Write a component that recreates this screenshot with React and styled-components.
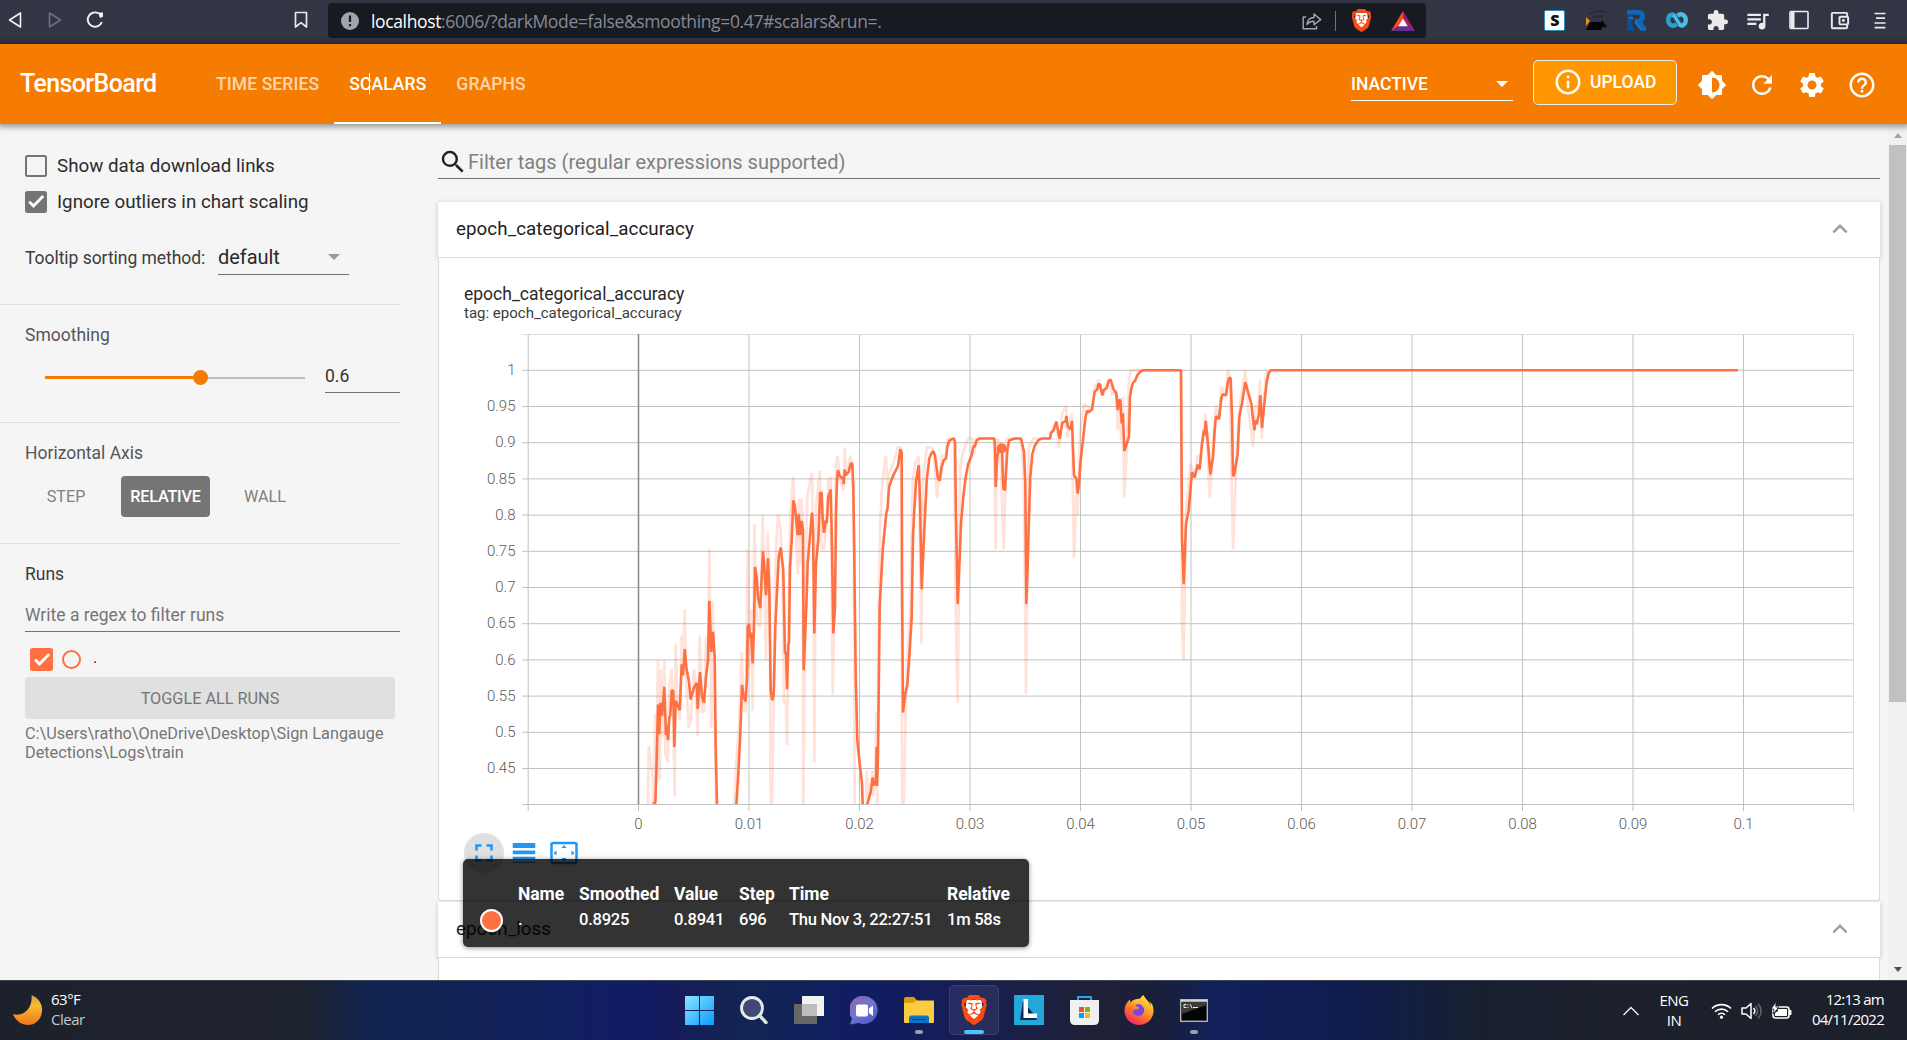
import React from "react";
import styled, { createGlobalStyle, css } from "styled-components";
import {
  MdBrightness6,
  MdRefresh,
  MdSettings,
  MdHelpOutline,
  MdInfoOutline,
  MdSearch,
  MdExtension,
  MdQueueMusic,
  MdFullscreen,
  MdLineWeight,
  MdSettingsOverscan,
  MdExpandLess,
  MdOutlineAccountBalanceWallet,
} from "react-icons/md";
import { SiBrave, SiFirefoxbrowser } from "react-icons/si";

const ui = `Roboto, "Noto Sans", sans-serif`;
const system = `"Open Sans", "Noto Sans", sans-serif`;

const GlobalStyle = createGlobalStyle`
  *, *::before, *::after { box-sizing: border-box; }
  body { margin: 0; overflow: hidden; font-family: ${ui}; color: #212121; }
  svg { display: block; flex: none; }
`;

const Screen = styled.div`
  width: 1907px;
  height: 1040px;
  display: flex;
  flex-direction: column;
  overflow: hidden;
  background: #f5f5f5;
`;

/* ---------- browser bar ---------- */
const BrowserBar = styled.div`
  height: 44px;
  flex: none;
  display: flex;
  align-items: center;
  padding: 0 7px 4px 8px;
  background: #323544;
`;
const NavIcons = styled.div`
  width: 320px;
  display: flex;
  align-items: center;
`;
const NavIcon = styled.span`
  display: flex;
  margin-left: ${(p) => p.$gap || 0}px;
`;
const Address = styled.div`
  width: 1098px;
  height: 35px;
  margin-top: 1px;
  padding: 0 11px 0 13px;
  display: flex;
  align-items: center;
  border-radius: 4px;
  background: #181a21;
`;
const Url = styled.div`
  margin-left: 12px;
  flex: 1;
  font: 400 17.5px/34px ${system};
  letter-spacing: -0.36px;
  color: #878993;
  white-space: nowrap;
`;
const Host = styled.span`
  color: #fff;
`;
const AddressDivider = styled.span`
  width: 1px;
  height: 20px;
  margin: 0 14px 0 13px;
  background: #70737c;
`;
const Extensions = styled.div`
  margin-left: auto;
  display: flex;
  align-items: center;
`;
const Extension = styled.span`
  width: 40.6px;
  display: flex;
  justify-content: center;
  color: #ebebee;
`;
const LetterTile = styled.span`
  width: 21px;
  height: 21px;
  border: 1px solid #2b8fb8;
  border-radius: 2px;
  background: #fff;
  color: #111;
  font: 800 16px/18px ${system};
  text-align: center;
`;

/* ---------- app header ---------- */
const Header = styled.header`
  position: relative;
  z-index: 3;
  height: 80px;
  flex: none;
  display: flex;
  align-items: center;
  padding: 0 20px;
  background: #f57c00;
  box-shadow: 0 1px 6px 2px rgba(0, 0, 0, 0.38);
  color: #fff;
`;
const Brand = styled.h1`
  margin: 0;
  width: 181px;
  font: 500 25px/82px ${ui};
  letter-spacing: -0.62px;
`;
const Tabs = styled.nav`
  display: flex;
  height: 80px;
`;
const Tab = styled.a`
  position: relative;
  padding: 0 15px;
  font: 500 17.5px/81px ${ui};
  letter-spacing: 0.1px;
  color: ${(p) => (p.$active ? "#fff" : "rgba(255,255,255,.7)")};
  box-shadow: ${(p) => (p.$active ? "inset 0 -2px #fff" : "none")};
`;
const TextCursor = styled.i`
  position: absolute;
  left: 35px;
  top: 29px;
  width: 1px;
  height: 21px;
  background: #fff;
`;
const HeaderTools = styled.div`
  margin-left: auto;
  display: flex;
  align-items: center;
`;
const Inactive = styled.div`
  width: 162px;
  height: 30px;
  margin: 4px 20px 0 0;
  padding: 0 5px 3px 0;
  display: flex;
  align-items: center;
  justify-content: space-between;
  border-bottom: 1px solid #fff;
  font: 500 17.5px/26px ${ui};
`;
const Caret = styled.i`
  border: 6px solid transparent;
  border-top-color: ${(p) => p.$color || "#fff"};
  border-bottom: 0;
`;
const Upload = styled.button`
  width: 144px;
  height: 45px;
  margin: 0 10px 3px 0;
  padding: 0 0 2px 19px;
  display: flex;
  align-items: center;
  gap: 7px;
  border: 1px solid #ebebeb;
  border-radius: 5px;
  background: #ff9800;
  color: #fff;
  font: 500 17.5px/40px ${ui};
`;
const HeaderIcon = styled.span`
  width: 50px;
  display: flex;
  justify-content: center;
  padding-top: 1px;
`;

/* ---------- workspace ---------- */
const Workspace = styled.div`
  height: 856px;
  display: flex;
  overflow: hidden;
`;
const Sidebar = styled.aside`
  width: 438px;
  flex: none;
`;
const Section = styled.section`
  width: 400px;
  height: ${(p) => p.$height}px;
  padding: ${(p) => p.$top}px 0 0 25px;
  border-bottom: ${(p) => (p.$last ? "0" : "1px solid #dedede")};
`;
const Title = styled.h3`
  margin: 0;
  font: 400 17.5px/20px ${ui};
  color: ${(p) => (p.$dark ? "#3c3c3c" : "#555")};
`;
const CheckRow = styled.label`
  height: 36px;
  display: flex;
  align-items: center;
  gap: 10px;
  font: 400 18.75px/36px ${ui};
  color: #2c2c2c;
`;
const Box = styled.span`
  width: ${(p) => p.$size || 22}px;
  height: ${(p) => p.$size || 22}px;
  display: flex;
  align-items: center;
  justify-content: center;
  border: 2px solid ${(p) => p.$color || "#747474"};
  border-radius: 2.5px;
  background: ${(p) => (p.$on ? p.$color || "#747474" : "transparent")};
`;
const SortRow = styled.div`
  height: 35px;
  margin-top: 20px;
  display: flex;
  font: 400 17.5px/37px ${ui};
  letter-spacing: -0.04px;
  color: #3c3c3c;
`;
const SortLabel = styled.span`
  width: 193px;
`;
const Select = styled.div`
  width: 131px;
  padding: 0 9px 0 0;
  display: flex;
  align-items: center;
  justify-content: space-between;
  border-bottom: 1px solid #737373;
  font: 400 20px/34px ${ui};
  color: #2a2a2a;
`;
const SliderRow = styled.div`
  height: 31px;
  margin-top: 17px;
  padding-left: 20px;
  display: flex;
  align-items: center;
  gap: 20px;
`;
const Track = styled.div`
  width: 260px;
  height: 2px;
  display: flex;
  align-items: center;
  background: #bdbdbd;
`;
const Fill = styled.span`
  width: 148px;
  height: 3px;
  background: #f57c00;
`;
const Thumb = styled.span`
  width: 15px;
  height: 15px;
  border-radius: 50%;
  background: #f57c00;
`;
const NumberField = styled.div`
  width: 75px;
  height: 31px;
  border-bottom: 1px solid #737373;
  font: 400 17.5px/28px ${ui};
  color: #333;
`;
const AxisButtons = styled.div`
  margin-top: 13px;
  display: flex;
  gap: 14px;
`;
const AxisButton = styled.button`
  width: 82px;
  height: 41px;
  padding: 0;
  border: 0;
  border-radius: 4px;
  background: transparent;
  color: #808080;
  font: 400 16.2px/41px ${ui};
  ${(p) =>
    p.$on &&
    css`
      width: 89px;
      background: #757575;
      color: #fff;
      font-weight: 500;
      letter-spacing: -0.2px;
    `}
`;
const RegexField = styled.div`
  height: 34px;
  margin-top: 14px;
  border-bottom: 1px solid #737373;
  font: 400 17.5px/34px ${ui};
  color: #757575;
`;
const RunRow = styled.div`
  height: 45px;
  padding: 10px 0 0 5px;
  display: flex;
  align-items: center;
`;
const RunDot = styled.span`
  width: 19px;
  height: 19px;
  margin: 0 12px 0 9px;
  border: 2px solid #ff7043;
  border-radius: 50%;
`;
const RunName = styled.span`
  font: 400 16px/18px ${ui};
  padding-bottom: 3px;
  color: #222;
`;
const ToggleButton = styled.button`
  width: 370px;
  height: 42px;
  border: 0;
  border-radius: 4px;
  background: #e0e0e0;
  color: #757575;
  font: 400 16.25px/42px ${ui};
`;
const LogPath = styled.p`
  margin: 5px 0 0;
  font: 400 16.25px/19px ${ui};
  color: #757575;
`;

const Main = styled.main`
  width: 1450px;
  flex: none;
`;
const FilterRow = styled.div`
  width: 1442px;
  height: 55px;
  padding-top: 21px;
  display: flex;
  align-items: center;
  border-bottom: 1px solid #737373;
  color: #808080;
  font: 400 20px/32px ${ui};
`;
const CardHeader = styled.div`
  position: relative;
  width: 1442px;
  height: 56px;
  margin-top: ${(p) => p.$gap}px;
  padding: 0 25px 1px 18px;
  display: flex;
  align-items: center;
  justify-content: space-between;
  background: #fff;
  border-bottom: 1px solid #dadada;
  box-shadow: 0 1px 5px rgba(0, 0, 0, 0.2);
  font: 400 18.75px/52px ${ui};
  color: #212121;
`;
const CardName = styled.span`
  padding-bottom: 1px;
  letter-spacing: 0.07px;
`;
const CardBody = styled.div`
  position: relative;
  z-index: 2;
  width: 1442px;
  height: 643px;
  padding: 26px 0 0 25px;
  background: #fff;
  border: 1px solid #dadada;
  border-top: 0;
  border-radius: 0 0 3px 3px;
`;
const ChartTitle = styled.div`
  font: 400 17.5px/20px ${ui};
  color: #2a2a2a;
`;
const ChartTag = styled.div`
  font: 400 15px/18px ${ui};
  color: #3c3c3c;
`;
const ChartSvg = styled.svg`
  width: 1400px;
  height: 503px;
  margin: 8px 0 0 0;
`;
const AxisText = styled.text`
  font: 300 15px ${ui};
  fill: #5c5c5c;
`;
const ChartActions = styled.div`
  display: flex;
  color: #2196f3;
`;
const ChartAction = styled.span`
  width: 40px;
  height: 40px;
  display: flex;
  align-items: center;
  justify-content: center;
  border-radius: 50%;
  background: ${(p) => (p.$on ? "#e0e0e0" : "transparent")};
`;
const Tooltip = styled.div`
  position: absolute;
  left: 24px;
  top: 601px;
  width: 566px;
  height: 88px;
  padding: 22px 0 0 17px;
  border-radius: 5px;
  background: rgba(0, 0, 0, 0.8);
  box-shadow: 0 1px 5px rgba(0, 0, 0, 0.45);
  color: #fff;
  display: grid;
  grid-template-columns: 38px 61px 95px 65px 50px 158px auto;
  grid-template-rows: 26px 26px;
  font: 500 16.6px/26px ${ui};
`;
const HeadCell = styled.b`
  font-weight: 700;
  font-size: 17.5px;
  letter-spacing: -0.06px;
`;
const Cell = styled.span`
  letter-spacing: -0.28px;
`;
const SeriesDot = styled.span`
  width: 23px;
  height: 23px;
  margin-top: 2px;
  border: 2px solid #fff;
  border-radius: 50%;
  background: #ff7043;
`;
const ScrollBar = styled.div`
  width: 19px;
  padding: 8px 0;
  display: flex;
  flex-direction: column;
  align-items: center;
  background: #f1f1f1;
`;
const ScrollArrow = styled.i`
  margin-bottom: ${(p) => (p.$up ? 7 : 0)}px;
  margin-top: ${(p) => (p.$up ? 1 : 0)}px;
  border: 4.5px solid transparent;
  ${(p) =>
    p.$up
      ? "border-top: 0; border-bottom: 5px solid #a3a3a3;"
      : "border-bottom: 0; border-top: 5px solid #505050; margin-top: auto;"}
`;
const ScrollThumb = styled.i`
  width: 17px;
  height: 557px;
  background: #c1c1c1;
`;

/* ---------- taskbar ---------- */
const Taskbar = styled.footer`
  position: relative;
  z-index: 4;
  height: 60px;
  flex: none;
  display: flex;
  align-items: center;
  border-top: 1px solid #3b4453;
  background: linear-gradient(
    90deg,
    #1d212b 0,
    #1d232d 300px,
    #11244f 365px,
    #11215a 520px,
    #101c66 640px,
    #171b5a 670px,
    #112552 745px,
    #101d63 860px,
    #171d56 960px,
    #1b1f44 1030px,
    #1e2035 1100px,
    #1a1f3a 1160px,
    #10205a 1215px,
    #101d50 1340px,
    #182030 1480px,
    #1c212b 1600px,
    #1c202a 100%
  );
  color: #fff;
  font: 400 15px/20px ${system};
`;
const Weather = styled.div`
  width: 665px;
  padding-left: 12px;
  display: flex;
  align-items: center;
  gap: 8px;
  letter-spacing: -0.5px;
`;
const Lines = styled.div`
  padding-bottom: 4px;
`;
const Soft = styled.div`
  color: #c6c8cb;
`;
const Apps = styled.div`
  display: flex;
  gap: 5px;
  padding: 0 0 1px 9px;
`;
const AppSlot = styled.div`
  width: 50px;
  height: 50px;
  display: flex;
  flex-direction: column;
  align-items: center;
  border-radius: 5px;
  border: 1px solid ${(p) => (p.$on ? "rgba(255,255,255,.09)" : "transparent")};
  background: ${(p) => (p.$on ? "rgba(255,255,255,.07)" : "none")};
`;
const AppIcon = styled.span`
  height: 44px;
  padding-top: 4px;
  display: flex;
  align-items: center;
`;
const Running = styled.i`
  width: ${(p) => (p.$on ? 20 : 8)}px;
  height: 4px;
  border-radius: 2px;
  background: ${(p) => (p.$on ? "#4cc2ff" : "#9a9cab")};
`;
const Tray = styled.div`
  margin-left: auto;
  padding: 0 23px 0 0;
  display: flex;
  align-items: center;
`;
const Language = styled.div`
  width: 40px;
  margin: 0 17px 0 15px;
  padding-bottom: 2px;
  text-align: center;
  letter-spacing: -0.5px;
`;
const StatusIcons = styled.div`
  display: flex;
  gap: 9px;
`;
const Clock = styled.div`
  width: 92px;
  padding-bottom: 4px;
  text-align: right;
  letter-spacing: -0.75px;
  white-space: nowrap;
`;

/* ---------- chart data ---------- */
/* Each piece is an origin and a list of points in thirds of a pixel from it. */
const A = [620, 480];
const B = [740, 420];
const C = [900, 350];

const smoothed = [
  [[A, "98,969 106,969 109,880 114,673 118,762 121,668 126,708 133,620 138,765 140,735 144,780 148,712 151,705 155,630 160,632 163,800 167,662 173,675 179,690 185,552 189,586 194,507 199,560 207,605 212,658 222,622 230,608 233,686 240,576 246,650 252,668 258,590 264,540 268,362 274,515 279,455 284,530 287,800 291,976"]],
  [
    [A, "349,976 355,880 361,760 366,614 371,650 377,664 381,590 383,440 387,432 390,472 393,457 398,550 402,440 405,260 410,290 414,350 421,384 425,290 429,213 433,260 438,345 444,234 448,330 452,632 457,660 461,645 466,440 476,230 482,202 490,270 495,520 498,515 501,627 505,490 507,490 510,260 515,180 520,60 525,80 533,165 536,102 541,165 545,122 549,150 551,570 559,380 563,250 576,97 579,150 583,460 588,250 595,180 600,38 605,38 608,120 612,158 617,120 620,130 625,50 632,28 636,200 640,460 645,380 648,100"],
    [B, "291,180 294,150 298,165 310,178 311,192 314,148 317,165 326,155 332,130 337,130 340,200 343,400"],
    [A, "704,340 707,580 712,780 720,860 726,910 728,976"],
  ],
  [
    [A, "741,976 752,935 758,892 762,915 768,905 770,800 771,917 774,820 779,380 788,210 799,100"],
    [B, "443,260 447,200 460,165 474,138 481,87 485,97 486,480"],
    [C, "7,800 9,1087 15,1035 22,1005 28,920 35,800 39,560 43,480 48,395 56,345 60,450 65,717 72,560 80,390 88,325 94,310 100,303 105,315 113,380 119,392 125,350 131,330 138,325 142,290 148,272 155,267 162,265 165,275 168,500 173,762 180,600 183,520 190,440 197,380 205,340 215,315 220,288 224,290 230,270 240,265 283,265 285,290 287,410 292,320 297,295 302,290 306,295 310,415 315,420 322,300 328,270 345,265 363,265 372,305 376,400 379,762 383,640 387,500 391,380 397,312 405,285 415,270 425,265 450,265 453,248 461,240 469,214 479,266 487,218 497,213 499,197 503,228 511,238 516,212 522,375 529,385 533,430 537,400 542,330 549,270 556,205 561,182 566,186 576,178 584,124 592,118 595,102 600,102 607,136 611,120 620,114 626,92 632,88 640,116 649,130 653,180 657,150 661,150 665,220 669,190 673,303 680,280 687,260 690,140 694,115 699,98 705,92 712,75 722,64 730,60 843,60 846,560 851,702 858,520 866,480 872,410 876,366 884,382 893,343 899,358 906,280 912,240 914,255 917,212 925,290 931,373 939,320 944,240 948,198 957,207 964,145 968,132 978,136 983,98 988,82 992,85 996,200 999,378 1003,372 1013,310 1018,200 1026,160 1036,96 1044,125 1054,160 1063,240 1067,210 1070,222 1077,190 1081,135 1086,233 1092,170 1100,95 1106,68 1112,60 2514,60"],
  ],
];

const raw = [
  [[A, "84,976 86,797 92,840 98,890 100,976 106,700 109,900 114,540 117,880 120,898 122,567 127,770 133,540 136,820 144,846 148,616 155,567 160,700 164,948 167,490 172,660 180,718 185,465 190,520 194,388 199,600 206,743 212,718 222,567 228,620 233,769 239,465 246,695 252,695 258,470 264,540 268,208 274,743 278,362 284,700 288,976"]],
  [
    [A, "342,976 350,830 357,740 365,516 371,690 377,695 383,208 388,560 393,388 398,692 403,132 412,430 421,440 428,106 438,540 443,157 449,300 452,976 456,976 462,600 468,200 474,103 482,150 488,320 492,665 498,665 501,795 506,400 511,100 519,-10 526,100 533,283 537,56 540,255 544,56 548,130 550,976 556,400 562,50 571,0 576,-22 580,200 583,847 588,80 599,-28 605,207 612,207 620,130 625,0 632,-10 638,642 644,300 648,-50"],
    [B, "293,107 300,180 311,210 314,82 319,165 331,107 337,130 341,300"],
    [A, "704,976"],
  ],
  [
    [A, "738,976 740,873 748,960 758,870 760,948 766,870 769,695 772,976 777,330 781,130 787,10"],
    [B, "437,107 443,200 447,160 460,130 474,80 481,80 485,200"],
    [A, "846,976 851,976"],
    [C, "20,950 30,800 38,395 46,340 56,318 64,880 69,400 80,290 98,293 103,320 111,443 117,380 125,315 138,320 142,267 162,265 168,830 173,1058 181,345 190,300 205,265 218,265 222,315 228,265 282,265 287,598 291,265 300,275 311,598 320,265 363,265 371,380 378,1032 386,290 400,265 450,265 455,240 469,214 476,293 487,190 499,165 502,262 515,190 522,623 530,400 533,495 540,250 552,162 575,178 584,110 596,88 607,136 615,110 626,88 636,135 649,120 653,240 657,140 664,270 668,140 673,443 680,300 687,90 692,60 843,60 846,830 851,930 858,480 872,340 884,382 893,315 900,330 917,190 929,443 940,270 948,165 957,207 964,110 978,136 983,62 988,62 999,598 1010,300 1020,160 1036,60 1045,180 1059,290 1067,165 1075,180 1080,88 1085,265 1092,130 1100,60"],
  ],
];

const toPoints = (pieces) =>
  pieces
    .flatMap(([[ox, oy], list]) =>
      list.split(" ").map((pair) => {
        const [x, y] = pair.split(",").map(Number);
        return `${(ox + x / 3).toFixed(1)},${(oy + y / 3 + 0.2).toFixed(1)}`;
      })
    )
    .join(" ");

const xTicks = ["0", "0.01", "0.02", "0.03", "0.04", "0.05", "0.06", "0.07", "0.08", "0.09", "0.1"];
const yTicks = ["1", "0.95", "0.9", "0.85", "0.8", "0.75", "0.7", "0.65", "0.6", "0.55", "0.5", "0.45"];

function Chart() {
  return (
    <ChartSvg viewBox="464 330 1400 503">
      <defs>
        <clipPath id="plot">
          <rect x="528" y="334" width="1326" height="470" />
        </clipPath>
      </defs>
      <g stroke="#c2c2c2">
        {yTicks.map((t, i) => (
          <line key={t} x1="522" x2="1853.5" y1={370.3 + i * 36.2} y2={370.3 + i * 36.2} />
        ))}
        {xTicks.map((t, i) => (
          <line key={t} y1="334" y2="811" x1={638.5 + i * 110.5} x2={638.5 + i * 110.5} />
        ))}
        <line x1="528.2" x2="528.2" y1="334" y2="811" />
        <line x1="1853.5" x2="1853.5" y1="334" y2="811" stroke="#ddd" />
        <line x1="522" x2="1853.5" y1="334.5" y2="334.5" stroke="#ddd" />
        <line x1="522" x2="1853.5" y1="804.5" y2="804.5" />
      </g>
      <line x1="638.5" x2="638.5" y1="334" y2="804" stroke="#8c8c8c" strokeWidth="1.6" />
      <g clipPath="url(#plot)" fill="none" strokeLinejoin="bevel">
        {raw.map((s, i) => (
          <polyline key={i} points={toPoints(s)} stroke="#ff7043" strokeOpacity=".2" strokeWidth="2.7" />
        ))}
        {smoothed.map((s, i) => (
          <polyline key={i} points={toPoints(s)} stroke="#ff7043" strokeWidth="2.6" />
        ))}
      </g>
      <circle cx="1001.7" cy="448.3" r="5" fill="#ff7043" />
      {yTicks.map((t, i) => (
        <AxisText key={t} x="515.5" y={375 + i * 36.2} textAnchor="end">
          {t}
        </AxisText>
      ))}
      {xTicks.map((t, i) => (
        <AxisText key={t} x={638.5 + i * 110.5} y="829" textAnchor="middle">
          {t}
        </AxisText>
      ))}
    </ChartSvg>
  );
}

/* ---------- small drawings ---------- */
const Check = ({ size = 20 }) => (
  <svg width={size} height={size} viewBox="0 0 20 20" fill="none" stroke="#fff" strokeWidth="2.9">
    <path d="M3.2 9.7l4.300 4.200L17.200 4.100" />
  </svg>
);

const BraveLogo = ({ size }) => (
  <svg width={size} height={size} viewBox="0 0 24 24">
    <path d="M6 4h12l1 9-7 7-7-7z" fill="#fff" />
    <SiBrave size={24} color="#fb4a14" />
  </svg>
);

const BackIcon = ({ flip, color }) => (
  <svg width="14" height="18" viewBox="0 0 14 18" fill="none" stroke={color} strokeWidth="1.6" strokeLinejoin="round">
    <path d={flip ? "M1.5 2v14L12.5 9z" : "M12.5 2v14L1.5 9z"} />
  </svg>
);

const extensions = [
  <LetterTile key="s">S</LetterTile>,
  <svg key="dog" width="22" height="22" viewBox="0 0 22 22">
    <path d="M1 8l4 4-4 5z" fill="#f28c1e" />
    <path d="M5 13h11l1-2 5 7-2 1-2-2-2 4H1z" fill="#050505" />
    <path d="M4 5l7-3 9 1M8 8l10-1" stroke="#26272f" strokeWidth="1.3" fill="none" />
  </svg>,
  <svg key="r" width="19" height="21" viewBox="0 0 19 21">
    <path d="M0 0h11q7 0 7 6.500 0 3.500-3 5.500l4 5v4h-4L8 12V9h3q2-.5 2-2.500T11 4.500H0z" fill="#0f66bd" />
    <path d="M0 4.500h4l3 4-3 4 4 8H0z" fill="#0b4f9c" />
    <path d="M2 8h4M8 12l6 8" stroke="#2f9be8" strokeWidth="1" />
  </svg>,
  <svg key="c" width="22" height="18" viewBox="0 0 22 18" fill="none" strokeLinecap="round">
    <path d="M13.500 12.500L9 5.500C7 2 2.300 3.500 2.200 9c0 4.500 4 7 7.300 5" stroke="#2b9fd0" strokeWidth="4.400" />
    <path d="M8.500 5.500l4.500 7c2 3.500 6.700 2 6.800-3.500 0-4.500-4-7-7.300-5" stroke="#49bde6" strokeWidth="4.400" />
    <path d="M10.500 4L15 12M7 6.500l4.500 7.500" stroke="#14506f" strokeWidth=".9" />
  </svg>,
  <MdExtension key="ext" size={23} />,
  <MdQueueMusic key="queue" size={27} />,
  <svg key="panel" width="20" height="20" viewBox="0 0 20 20" fill="none" stroke="currentColor">
    <rect x="1" y="1.500" width="18" height="17" rx="1" strokeWidth="1.600" />
    <path d="M3.500 2v16" strokeWidth="4" />
  </svg>,
  <MdOutlineAccountBalanceWallet key="wallet" size={23} />,
  <svg key="menu" width="12" height="17" viewBox="0 0 12 17" stroke="currentColor" strokeWidth="1.700">
    <path d="M.5 1.500h11M2 6.200h9M.5 11h11M.5 15.700h11" />
  </svg>,
];

function Browser() {
  return (
    <BrowserBar>
      <NavIcons>
        <NavIcon><BackIcon color="#f2f2f4" /></NavIcon>
        <NavIcon $gap={26}><BackIcon flip color="#6e7180" /></NavIcon>
        <NavIcon $gap={24}>
          <svg width="18" height="18" viewBox="0 0 18 18" fill="none" stroke="#f2f2f4" strokeWidth="1.900">
            <path d="M12.500 2.300A7.200 7.200 0 1 0 15.800 11" />
            <path d="M12 1.500h5v4.200l-3 1.200z" fill="#f2f2f4" stroke="none" />
          </svg>
        </NavIcon>
        <NavIcon $gap={190}>
          <svg width="14" height="18" viewBox="0 0 14 18" fill="none" stroke="#e8e8ec" strokeWidth="1.700" strokeLinejoin="round">
            <path d="M1.500 1.500h11v14.500L7 11.700 1.500 16z" />
          </svg>
        </NavIcon>
      </NavIcons>
      <Address>
        <svg width="18" height="18" viewBox="0 0 18 18">
          <circle cx="9" cy="9" r="9" fill="#a2a4ad" />
          <path d="M9 3.500v6.500M9 12v2.300" stroke="#181a21" strokeWidth="2.200" />
        </svg>
        <Url>
          <Host>localhost</Host>:6006/?darkMode=false&amp;smoothing=0.47#scalars&amp;run=.
        </Url>
        <svg width="20" height="18" viewBox="0 0 20 18" fill="none" stroke="#a5a7ae" strokeWidth="1.400" strokeLinejoin="round">
          <path d="M4 5H1.200v11.800h13.300V14" />
          <path d="M5 12.500c.5-5 3.300-7 7-7V2l6.700 5.600L12 12.800V9.300c-3 0-5 .6-7 3.200z" />
        </svg>
        <AddressDivider />
        <BraveLogo size={23} />
        <NavIcon $gap={18}>
          <svg width="24" height="20" viewBox="0 0 24 20">
            <path d="M12 0L0 20l12-6z" fill="#ff4724" />
            <path d="M12 0l12 20-12-6z" fill="#9e1f63" />
            <path d="M0 20h24l-7-5H7z" fill="#662d91" />
            <path d="M12 7.500l4.700 7.700H7.300z" fill="#fff" />
          </svg>
        </NavIcon>
      </Address>
      <Extensions>
        {extensions.map((icon, i) => (
          <Extension key={i}>{icon}</Extension>
        ))}
      </Extensions>
    </BrowserBar>
  );
}

function TopHeader() {
  return (
    <Header>
      <Brand>TensorBoard</Brand>
      <Tabs>
        <Tab>TIME SERIES</Tab>
        <Tab $active>SCALARS<TextCursor /></Tab>
        <Tab>GRAPHS</Tab>
      </Tabs>
      <HeaderTools>
        <Inactive>INACTIVE<Caret /></Inactive>
        <Upload><MdInfoOutline size={30} />UPLOAD</Upload>
        <HeaderIcon><MdBrightness6 size={30} /></HeaderIcon>
        <HeaderIcon><MdRefresh size={30} /></HeaderIcon>
        <HeaderIcon><MdSettings size={30} /></HeaderIcon>
        <HeaderIcon><MdHelpOutline size={30} /></HeaderIcon>
      </HeaderTools>
    </Header>
  );
}

function Settings() {
  return (
    <Sidebar>
      <Section $height={181} $top={24}>
        <CheckRow><Box />Show data download links</CheckRow>
        <CheckRow><Box $on><Check /></Box>Ignore outliers in chart scaling</CheckRow>
        <SortRow>
          <SortLabel>Tooltip sorting method:</SortLabel>
          <Select>default<Caret $color="#9a9a9a" /></Select>
        </SortRow>
      </Section>
      <Section $height={118} $top={20}>
        <Title>Smoothing</Title>
        <SliderRow>
          <Track><Fill /><Thumb /></Track>
          <NumberField>0.6</NumberField>
        </SliderRow>
      </Section>
      <Section $height={121} $top={20}>
        <Title>Horizontal Axis</Title>
        <AxisButtons>
          <AxisButton>STEP</AxisButton>
          <AxisButton $on>RELATIVE</AxisButton>
          <AxisButton>WALL</AxisButton>
        </AxisButtons>
      </Section>
      <Section $height={300} $top={20} $last>
        <Title $dark>Runs</Title>
        <RegexField>Write a regex to filter runs</RegexField>
        <RunRow>
          <Box $on $size={23} $color="#ff7043"><Check /></Box>
          <RunDot />
          <RunName>.</RunName>
        </RunRow>
        <ToggleButton>TOGGLE ALL RUNS</ToggleButton>
        <LogPath>
          C:\Users\ratho\OneDrive\Desktop\Sign Langauge
          <br />
          Detections\Logs\train
        </LogPath>
      </Section>
    </Sidebar>
  );
}

const tooltipHead = ["", "Name", "Smoothed", "Value", "Step", "Time", "Relative"];
const tooltipRow = [".", "0.8925", "0.8941", "696", "Thu Nov 3, 22:27:51", "1m 58s"];

function Scalars() {
  return (
    <Main>
      <FilterRow>
        <MdSearch size={30} color="#212121" />
        Filter tags (regular expressions supported)
      </FilterRow>
      <CardHeader $gap={23}>
        <CardName>epoch_categorical_accuracy</CardName>
        <MdExpandLess size={30} color="#9e9e9e" />
      </CardHeader>
      <CardBody>
        <ChartTitle>epoch_categorical_accuracy</ChartTitle>
        <ChartTag>tag: epoch_categorical_accuracy</ChartTag>
        <Chart />
        <ChartActions>
          <ChartAction $on><MdFullscreen size={30} /></ChartAction>
          <ChartAction><MdLineWeight size={30} /></ChartAction>
          <ChartAction><MdSettingsOverscan size={30} /></ChartAction>
        </ChartActions>
        <Tooltip>
          {tooltipHead.map((t, i) => (
            <HeadCell key={i}>{t}</HeadCell>
          ))}
          <SeriesDot />
          {tooltipRow.map((t, i) => (
            <Cell key={i}>{t}</Cell>
          ))}
        </Tooltip>
      </CardBody>
      <CardHeader $gap={1}>
        <CardName>epoch_loss</CardName>
        <MdExpandLess size={30} color="#9e9e9e" />
      </CardHeader>
      <CardBody />
    </Main>
  );
}

const apps = [
  {
    name: "start",
    icon: (
      <svg width="29" height="29" viewBox="0 0 29 29">
        <defs>
          <linearGradient id="win" x2="1" y2="1">
            <stop stopColor="#8be4ff" />
            <stop offset="1" stopColor="#0a9bff" />
          </linearGradient>
        </defs>
        <path d="M0 0h14v14H0zM15 0h14v14H15zM0 15h14v14H0zM15 15h14v14H15z" fill="url(#win)" />
      </svg>
    ),
  },
  {
    name: "search",
    icon: (
      <svg width="28" height="28" viewBox="0 0 28 28">
        <circle cx="12" cy="12" r="10.500" fill="#3f4a78" stroke="#e9e9ec" strokeWidth="2.800" />
        <path d="M19.500 19.500l6.500 7" stroke="#e0e0e3" strokeWidth="3.400" strokeLinecap="round" />
      </svg>
    ),
  },
  {
    name: "task view",
    icon: (
      <svg width="30" height="28" viewBox="0 0 30 28">
        <rect y="8" width="23" height="20" fill="#676767" />
        <rect x="8" width="22" height="20" fill="#f2f2f2" />
        <rect x="8" y="8" width="15" height="12" fill="#bdbdbd" />
      </svg>
    ),
  },
  {
    name: "chat",
    icon: (
      <svg width="29" height="29" viewBox="0 0 29 29">
        <defs>
          <linearGradient id="chat" x1=".1" x2=".8" y1="0" y2="1">
            <stop stopColor="#8d6aa8" />
            <stop offset=".5" stopColor="#6f74cf" />
            <stop offset="1" stopColor="#5059c9" />
          </linearGradient>
        </defs>
        <path d="M14.500 0a14 14 0 1 1-6 27L0 28.500l2-6A14 14 0 0 1 14.500 0z" fill="url(#chat)" />
        <rect x="6" y="8.500" width="12" height="12" rx="2" fill="#fff" />
        <path d="M19 12.500l4-3v10.500l-4-3z" fill="#fff" />
      </svg>
    ),
  },
  {
    name: "files",
    running: true,
    icon: (
      <svg width="30" height="27" viewBox="0 0 30 27">
        <path d="M0 2q0-2 2-2h8l3 3.500V8H0z" fill="#dd9a0e" />
        <path d="M0 6h9l3-2.500h18V25q0 1-1 1H1q-1 0-1-1z" fill="#fccb3f" />
        <path d="M5 26v-5q0-2.500 2.500-2.500h15Q25 18.500 25 21v5z" fill="#0d74c8" />
        <path d="M8.500 22.500h13" stroke="#07498a" strokeWidth="1.200" />
      </svg>
    ),
  },
  { name: "brave", running: true, active: true, icon: <BraveLogo size={30} /> },
  {
    name: "l",
    icon: (
      <svg width="30" height="30" viewBox="0 0 30 30">
        <rect width="30" height="30" fill="#22a9d8" />
        <path d="M9 6l-3 19 16 0 1-2z" fill="#0b2c5a" />
        <path d="M9.500 4h4.500v14.500h9V23H9.500z" fill="#fff" />
      </svg>
    ),
  },
  {
    name: "store",
    icon: (
      <svg width="29" height="29" viewBox="0 0 29 29">
        <path d="M8 6V1h13v5" fill="none" stroke="#22a8e6" strokeWidth="2" />
        <path d="M0 4h29v20q0 5-5 5H5q-5 0-5-5z" fill="#f0f0f0" />
        <path d="M9 11h5v5H9z" fill="#f25022" />
        <path d="M15 11h5v5h-5z" fill="#7fba00" />
        <path d="M9 17h5v5H9z" fill="#00a4ef" />
        <path d="M15 17h5v5h-5z" fill="#ffb900" />
      </svg>
    ),
  },
  {
    name: "firefox",
    icon: (
      <svg width="30" height="30" viewBox="0 0 24 24">
        <defs>
          <linearGradient id="fox" x1=".8" x2=".2" y2="1">
            <stop stopColor="#fff04a" />
            <stop offset=".5" stopColor="#ff8a24" />
            <stop offset="1" stopColor="#f3186b" />
          </linearGradient>
        </defs>
        <circle cx="12" cy="13" r="10" fill="url(#fox)" />
        <circle cx="11.500" cy="12" r="4.800" fill="#7a45e0" />
        <SiFirefoxbrowser size={24} style={{ fill: "url(#fox)" }} />
      </svg>
    ),
  },
  {
    name: "terminal",
    running: true,
    icon: (
      <svg width="28" height="23" viewBox="0 0 28 23">
        <rect x=".7" y=".7" width="26.600" height="21.600" fill="#050505" stroke="#b3b3b3" strokeWidth="1.400" />
        <path d="M1 1.800h26" stroke="#d5d5d5" strokeWidth="2" />
        <path d="M1.500 3h25v3L1.500 15z" fill="#3c3c3c" />
        <path d="M6.500 5.500h-2.500v3h2.500M8 5.500v1M8 7.800v1M10 5l2 4M13 8.500h5" stroke="#e8e8e8" fill="none" />
      </svg>
    ),
  },
];

function BottomBar() {
  return (
    <Taskbar>
      <Weather>
        <svg width="31" height="32" viewBox="0 0 31 32">
          <defs>
            <linearGradient id="moon" x2="0" y2="1">
              <stop stopColor="#c9a15a" />
              <stop offset=".35" stopColor="#f8bb2e" />
              <stop offset="1" stopColor="#f0741c" />
            </linearGradient>
          </defs>
          <path d="M19.500 0C27 3 31 10 30 17c-1 8-7 13-14 13C9 30 3 25 1 19c10 3 20-5 18.500-19z" fill="url(#moon)" />
        </svg>
        <Lines>
          <div>63°F</div>
          <Soft>Clear</Soft>
        </Lines>
      </Weather>
      <Apps>
        {apps.map((a) => (
          <AppSlot key={a.name} $on={a.active}>
            <AppIcon>{a.icon}</AppIcon>
            {a.running && <Running $on={a.active} />}
          </AppSlot>
        ))}
      </Apps>
      <Tray>
        <svg width="16" height="10" viewBox="0 0 16 10" fill="none" stroke="#f0f0f0" strokeWidth="1.400">
          <path d="M.5 9L8 1.500 15.500 9" />
        </svg>
        <Language>
          <div>ENG</div>
          <div>IN</div>
        </Language>
        <StatusIcons>
          <svg width="21" height="18" viewBox="0 0 21 18" fill="none" stroke="#fff" strokeWidth="1.600">
            <path d="M1 6.500a13.500 13.500 0 0 1 19 0M4 9.800a9.300 9.300 0 0 1 13 0M7 12.800a5 5 0 0 1 7 0" />
            <circle cx="10.500" cy="15.200" r="1.600" fill="#fff" stroke="none" />
          </svg>
          <svg width="21" height="18" viewBox="0 0 21 18" fill="none" stroke="#fff" strokeWidth="1.500">
            <path d="M1 6h4l5-4.500v15L5 12H1zM12.500 6a4.500 4.500 0 0 1 0 6" strokeLinejoin="round" />
            <path d="M14.500 4a7 7 0 0 1 0 10M17 1.800a10 10 0 0 1 0 14.400" stroke="#62656d" />
          </svg>
          <svg width="21" height="18" viewBox="0 0 21 18">
            <rect x="2" y="5" width="16" height="11" rx="2.500" fill="none" stroke="#fff" strokeWidth="1.600" />
            <path d="M7 7h9v7H4v-3l3-2z" fill="#fff" />
            <path d="M18.500 8.500h1.500v4h-1.500z" fill="#fff" stroke="#fff" />
            <path d="M5 0L0 7h3l-1 5 6-7H4.800z" fill="#fff" stroke="#1c202a" strokeWidth=".8" />
          </svg>
        </StatusIcons>
        <Clock>
          <div>12:13 am</div>
          <div>04/11/2022</div>
        </Clock>
      </Tray>
    </Taskbar>
  );
}

export default function App() {
  return (
    <Screen>
      <GlobalStyle />
      <Browser />
      <TopHeader />
      <Workspace>
        <Settings />
        <Scalars />
        <ScrollBar>
          <ScrollArrow $up />
          <ScrollThumb />
          <ScrollArrow />
        </ScrollBar>
      </Workspace>
      <BottomBar />
    </Screen>
  );
}
